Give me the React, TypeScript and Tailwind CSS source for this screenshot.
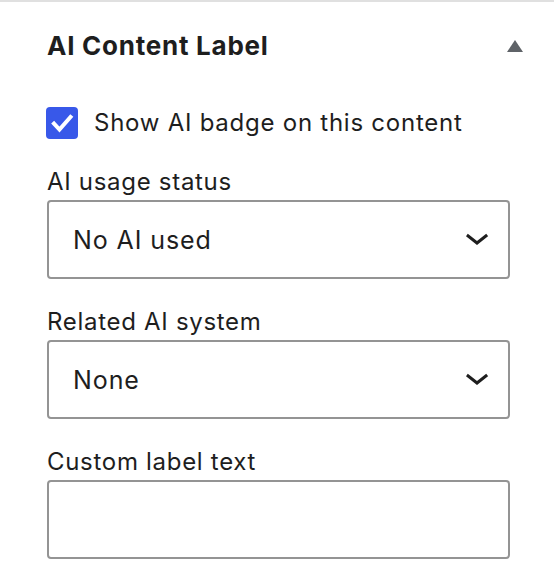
import React from "react";

function Chevron() {
  return (
    <svg width="48" height="48" viewBox="0 0 24 24" className="shrink-0 mb-[5px]" aria-hidden="true">
      <path d="M17.5 11.6L12 16l-5.5-4.4.9-1.2L12 14l4.6-3.6 1 1.2z" fill="#1e1e1e" />
    </svg>
  );
}

function SelectBox({ value }: { value: string }) {
  return (
    <div className="mt-[6px] flex h-[79px] items-center justify-between rounded-[4px] border-2 border-[#949494] bg-white pl-[24px] pr-[7px]">
      <span className="text-[25px] leading-[32px] tracking-[0.9px] text-[#1e1e1e]">{value}</span>
      <Chevron />
    </div>
  );
}

function Field({ label, children }: { label: string; children: React.ReactNode }) {
  return (
    <div className="mt-[31px]">
      <div className="text-[24px] leading-[24px] tracking-[0.7px] text-[#1e1e1e]">{label}</div>
      {children}
    </div>
  );
}

export default function App() {
  return (
    <div className="h-[586px] w-[554px] overflow-hidden border-t-2 border-[#e0e0e0] bg-white font-['Inter','Noto_Sans',sans-serif] text-[#1e1e1e]">
      <div className="pl-[47px] pr-[44px]">
        <div className="mt-[28px] flex h-[32px] items-center justify-between">
          <h2 className="text-[26px] font-bold leading-[32px] tracking-[0.75px] text-[#1e1e1e]">AI Content Label</h2>
          <svg width="16" height="12" viewBox="0 0 16 12" className="mr-[-13px]" aria-hidden="true">
            <polygon points="8,0 16,12 0,12" fill="#5f6368" />
          </svg>
        </div>

        <div className="mt-[45px] flex h-[32px] items-center gap-[16px]">
          <div className="ml-[-1px] flex h-[32px] w-[32px] items-center justify-center rounded-[4px] bg-[#3858e9]">
            <svg width="32" height="32" viewBox="0 0 32 32" aria-hidden="true">
              <polyline points="8,16.5 13.5,22.5 24.5,10" fill="none" stroke="#fff" strokeWidth="4" strokeLinecap="square" strokeLinejoin="miter" />
            </svg>
          </div>
          <span className="text-[24px] leading-[32px] tracking-[0.75px] text-[#1e1e1e]">Show AI badge on this content</span>
        </div>

        <Field label="AI usage status">
          <SelectBox value="No AI used" />
        </Field>

        <Field label="Related AI system">
          <SelectBox value="None" />
        </Field>

        <Field label="Custom label text">
          <div className="mt-[6px] h-[79px] rounded-[4px] border-2 border-[#949494] bg-white" />
        </Field>
      </div>
    </div>
  );
}
